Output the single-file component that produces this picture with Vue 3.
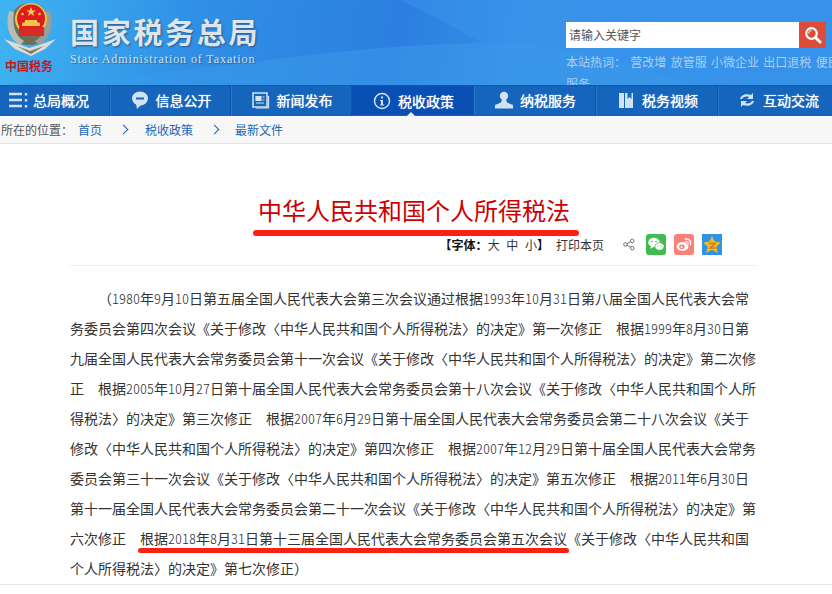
<template>
  <div class="page">
    <header class="top">
      <svg class="top-bg" width="832" height="85" viewBox="0 0 832 85">
        <path d="M0 85 C 170 78 330 45 480 43 C 560 42 620 62 690 85 Z" fill="#3a9bea" opacity="0.55" />
        <path d="M400 0 C 470 30 490 65 640 85 L 832 85 L 832 0 Z" fill="#3b97ea" opacity="0.45" />
      </svg>
      <div class="brand">
        <svg class="emblem" width="53" height="55" viewBox="0 0 53 55">
          <ellipse cx="26.5" cy="22" rx="20" ry="21" fill="#6f6e58" />
          <path d="M6 9 C 2 24 6 37 17 43 L 21 39 C 12 34 9 23 11 10 Z" fill="#b9bcb4" />
          <path d="M47 9 C 51 24 47 37 36 43 L 32 39 C 41 34 44 23 42 10 Z" fill="#9a9e96" />
          <circle cx="28" cy="17" r="16" fill="#e8c84a" />
          <circle cx="28" cy="16.5" r="14" fill="#de1c20" />
          <path d="M28 5l1.4 3.4h3.6l-2.9 2.1 1.1 3.4-3.2-2.1-3 2.1 1.1-3.4-2.9-2.1h3.5z" fill="#f4d040" />
          <circle cx="19.5" cy="12" r="1.3" fill="#f4d040" />
          <circle cx="36.5" cy="12" r="1.3" fill="#f4d040" />
          <path d="M19 24h18v-3l-3-1v-2H22v2l-3 1z" fill="#f0c848" />
          <rect x="16" y="25" width="25" height="9" fill="#d82a24" />
          <path d="M1 37 L18 43 L26 46 L36 43 L53 37 L42 47 L28 54 L12 47 Z" fill="#dcdcd4" />
          <path d="M14 44 L27 49 L41 44 L28 52 Z" fill="#7c7a70" />
        </svg>
        <span class="seal">中国税务</span>
      </div>
      <div class="title-box">
        <div class="org-cn">国家税务总局</div>
        <div class="org-en">State Administration of Taxation</div>
      </div>
      <div class="search-box">
        <div class="search">
          <div class="search-input">请输入关键字</div>
          <button class="search-btn">
            <svg width="18" height="18" viewBox="0 0 18 18">
              <circle cx="7.5" cy="7.5" r="5.3" fill="none" stroke="#fff" stroke-width="2.2" />
              <path d="M11.5 11.5 L16 16" stroke="#fff" stroke-width="3" stroke-linecap="round" />
              <path d="M4.6 7.5 A3 3 0 0 1 7.5 4.6" fill="none" stroke="#fff" stroke-width="1" />
            </svg>
          </button>
        </div>
        <div class="hot">本站热词：&nbsp;营改增 放管服 小微企业 出口退税 便民服务</div>
      </div>
    </header>

    <nav class="nav">
      <a v-for="item in navItems" :key="item.name" class="nav-item" :class="{ active: item.active }">
        <svg class="nav-icon" width="22" height="20" viewBox="0 0 22 20" v-html="item.icon"></svg>
        <span>{{ item.name }}</span>
      </a>
    </nav>

    <div class="crumbs">
      <span class="crumb-label">所在的位置：</span>
      <a class="crumb">首页</a>
      <i class="crumb-arrow"></i>
      <a class="crumb">税收政策</a>
      <i class="crumb-arrow"></i>
      <a class="crumb">最新文件</a>
    </div>

    <main class="article">
      <div class="head">
        <h1 class="doc-title">中华人民共和国个人所得税法</h1>
        <span class="title-line"></span>
        <div class="tools">
          <span class="font-tool"><b>【字体：</b>大&nbsp;&nbsp;中&nbsp;&nbsp;小<b>】</b></span>
          <span class="print">打印本页</span>
          <svg class="share" width="12" height="13" viewBox="0 0 13 13">
            <circle cx="10" cy="2.6" r="1.9" fill="none" stroke="#666" />
            <circle cx="10" cy="10.4" r="1.9" fill="none" stroke="#666" />
            <circle cx="2.6" cy="6.5" r="1.9" fill="none" stroke="#666" />
            <path d="M4.3 5.6 L8.3 3.5 M4.3 7.4 L8.3 9.5" stroke="#666" />
          </svg>
          <svg class="social" width="20" height="21" viewBox="0 0 20 21">
            <rect width="20" height="21" rx="3" fill="#3fbc4b" />
            <ellipse cx="8" cy="8.5" rx="5.8" ry="4.7" fill="#fff" />
            <path d="M5 11.5 L4.5 15 L8 12.5 Z" fill="#fff" />
            <ellipse cx="13.5" cy="12.5" rx="4.6" ry="3.8" fill="#fff" stroke="#3fbc4b" stroke-width="0.8" />
            <circle cx="6" cy="7.5" r="0.8" fill="#3fbc4b" />
            <circle cx="10" cy="7.5" r="0.8" fill="#3fbc4b" />
            <circle cx="12" cy="12" r="0.6" fill="#3fbc4b" />
            <circle cx="15" cy="12" r="0.6" fill="#3fbc4b" />
          </svg>
          <svg class="social" width="20" height="21" viewBox="0 0 20 21">
            <rect width="20" height="21" rx="3" fill="#fb8075" />
            <ellipse cx="8.5" cy="12.5" rx="6" ry="4.4" fill="#fff" />
            <ellipse cx="8" cy="12.8" rx="2.8" ry="2.3" fill="#fb8075" />
            <circle cx="7.6" cy="13" r="1" fill="#fff" />
            <path d="M11.5 5 C 15 4.4 17.5 7 16.4 10.6" fill="none" stroke="#fff" stroke-width="1.5" stroke-linecap="round" />
            <path d="M12 7.6 C 13.4 7.4 14.5 8.4 14.1 10" fill="none" stroke="#fff" stroke-width="1.2" stroke-linecap="round" />
          </svg>
          <svg class="social" width="20" height="21" viewBox="0 0 20 21">
            <rect width="20" height="21" fill="#2c93e8" />
            <path d="M10 2 L12.7 7.6 L19 8.4 L14.4 12.6 L15.8 19 L10 15.8 L4.2 19 L5.6 12.6 L1 8.4 L7.3 7.6 Z" fill="#f5b91f" />
            <path d="M7 9.5 H13 L8 14 H13.5" fill="none" stroke="#d9761a" stroke-width="1.4" />
          </svg>
        </div>
      </div>

      <div class="body-text">
        <p v-for="(line, i) in lines" :key="i" class="line" :class="{ indent: i === 0 }">
          <template v-for="(part, j) in splitDigits(line)" :key="j"><span v-if="/\d/.test(part)" class="num">{{ part }}</span><template v-else>{{ part }}</template></template>
        </p>
        <span class="mark"></span>
      </div>
    </main>
    <div class="foot-line"></div>
  </div>
</template>

<script setup>
const navItems = [
  {
    name: '总局概况',
    icon: '<path d="M1 4h13M1 10h13M1 16h13" stroke="#d3e2f2" stroke-width="2.4"/><path d="M18 3v2.4M18 9v2.4M18 15v2.4" stroke="#d3e2f2" stroke-width="2.4"/>'
  },
  {
    name: '信息公开',
    icon: '<ellipse cx="11" cy="8.5" rx="8" ry="7" fill="#d3e2f2"/><path d="M7 14l1 5 4-4z" fill="#d3e2f2"/><rect x="7" y="7.5" width="8" height="2" fill="#1665bd"/>'
  },
  {
    name: '新闻发布',
    icon: '<rect x="3" y="3" width="14" height="14" fill="none" stroke="#d3e2f2" stroke-width="1.5"/><path d="M18.5 6v12H6" fill="none" stroke="#d3e2f2" stroke-width="1.2"/><path d="M6 6.5h5v4H6zM6 13h8M12.5 7h2M12.5 10h2" fill="#d3e2f2" stroke="#d3e2f2" stroke-width="1.2"/>'
  },
  {
    name: '税收政策',
    active: true,
    icon: '<circle cx="11" cy="10" r="7.5" fill="none" stroke="#d3e2f2" stroke-width="1.5"/><rect x="10" y="5.5" width="2" height="2" fill="#d3e2f2"/><path d="M9 9h3v4.5h1.2v1H9v-1h1V10H9z" fill="#d3e2f2"/>'
  },
  {
    name: '纳税服务',
    icon: '<circle cx="11" cy="6" r="4.2" fill="#d3e2f2"/><path d="M9 9.5h4l1 3 6 2.5v3.5H2V15l6-2.5z" fill="#d3e2f2"/>'
  },
  {
    name: '税务视频',
    icon: '<path d="M4 3h5v15H4z" fill="#d3e2f2"/><path d="M10 3h2.5v6l2-2 2 2V3H18v15h-8z" fill="#d3e2f2"/>'
  },
  {
    name: '互动交流',
    icon: '<path d="M4 9c1-4 6-6 11-4l2-2v6h-6l2-2c-3-1-6 0-7 2z" fill="#d3e2f2"/><path d="M18 11c-1 4-6 6-11 4l-2 2v-6h6l-2 2c3 1 6 0 7-2z" fill="#d3e2f2"/>'
  }
]

const lines = [
  '（1980年9月10日第五届全国人民代表大会第三次会议通过根据1993年10月31日第八届全国人民代表大会常',
  '务委员会第四次会议《关于修改〈中华人民共和国个人所得税法〉的决定》第一次修正　根据1999年8月30日第',
  '九届全国人民代表大会常务委员会第十一次会议《关于修改〈中华人民共和国个人所得税法〉的决定》第二次修',
  '正　根据2005年10月27日第十届全国人民代表大会常务委员会第十八次会议《关于修改〈中华人民共和国个人所',
  '得税法〉的决定》第三次修正　根据2007年6月29日第十届全国人民代表大会常务委员会第二十八次会议《关于',
  '修改〈中华人民共和国个人所得税法〉的决定》第四次修正　根据2007年12月29日第十届全国人民代表大会常务',
  '委员会第三十一次会议《关于修改〈中华人民共和国个人所得税法〉的决定》第五次修正　根据2011年6月30日',
  '第十一届全国人民代表大会常务委员会第二十一次会议《关于修改〈中华人民共和国个人所得税法〉的决定》第',
  '六次修正　根据2018年8月31日第十三届全国人民代表大会常务委员会第五次会议《关于修改〈中华人民共和国',
  '个人所得税法〉的决定》第七次修正）'
]

// digits are half width in the original, the rest stays full width
const splitDigits = (line) => line.split(/(\d+)/).filter(Boolean)
</script>

<style scoped>
.page {
  width: 832px;
  height: 594px;
  overflow: hidden;
  position: relative;
  background: #fff;
  font-family: "Liberation Sans", "Noto Sans CJK SC", sans-serif;
  font-size: 14px;
  color: #333;
}

.top {
  position: relative;
  height: 85px;
  display: flex;
  overflow: hidden;
  background: linear-gradient(100deg, #3fb4f1 0%, #2f8fe6 24%, #2c7fe0 48%, #3690e8 62%, #338fe7 100%);
}

.top-bg {
  position: absolute;
  left: 0;
  top: 0;
}

.brand {
  position: relative;
  width: 70px;
  flex: none;
  padding: 2px 0 0 3px;
  box-sizing: border-box;
}

.emblem {
  display: block;
}

.seal {
  display: block;
  margin-left: 2px;
  font-family: "Noto Sans CJK SC", sans-serif;
  font-size: 12px;
  line-height: 17px;
  font-weight: 700;
  color: #c8161d;
  white-space: nowrap;
}

.title-box {
  position: relative;
  flex: none;
  width: 496px;
  padding-top: 14px;
}

.org-cn {
  font-family: "Noto Sans CJK SC", sans-serif;
  font-size: 29px;
  line-height: 34px;
  font-weight: 700;
  letter-spacing: 2.7px;
  color: #dfe5ea;
  text-shadow: 1px 1px 2px rgba(40, 70, 110, 0.75);
}

.org-en {
  margin-top: 4px;
  font-family: "Liberation Serif", serif;
  font-size: 12px;
  line-height: 14px;
  letter-spacing: 0.9px;
  color: #d4e2ee;
  text-shadow: 1px 1px 1px rgba(30, 60, 110, 0.6);
  white-space: nowrap;
}

.search-box {
  position: relative;
  flex: none;
  width: 280px;
  padding-top: 22px;
}

.search {
  display: flex;
  width: 260px;
  height: 26px;
}

.search-input {
  flex: 1;
  background: #fff;
  padding: 2px 0 0 3px;
  font-size: 12px;
  line-height: 24px;
  color: #555;
}

.search-btn {
  width: 27px;
  height: 26px;
  padding: 0;
  border: none;
  background: #dd4b39;
  display: flex;
  align-items: center;
  justify-content: center;
}

.hot {
  margin-top: 4px;
  font-size: 12px;
  line-height: 22px;
  word-spacing: 1px;
  color: #a9d0f3;
  width: 280px;
}

.nav {
  height: 31px;
  display: flex;
  background: #1665bd;
  border-top: 1px solid #115aab;
  box-sizing: border-box;
}

.nav-item {
  position: relative;
  flex: none;
  width: 121px;
  display: flex;
  align-items: center;
  justify-content: center;
  gap: 5px;
  padding-bottom: 2px;
  box-sizing: border-box;
  border-right: 1px solid #0d54a6;
  box-shadow: 1px 0 0 #2a7ac8;
  font-size: 14px;
  color: #fff;
  text-shadow: 0 0 1px #fff;
  white-space: nowrap;
}

.nav-item:nth-child(n + 4) {
  width: 122px;
}

.nav-item:first-child {
  width: 110px;
  justify-content: flex-start;
  padding-left: 8px;
  gap: 3px;
}

.nav-item:last-child {
  width: 114px;
  padding-left: 5px;
  border-right: none;
  box-shadow: none;
}

.nav-item.active {
  height: 29px;
  padding-bottom: 0;
  background: #0a4fb4;
}

.nav-item.active::after {
  content: "";
  position: absolute;
  left: 54px;
  bottom: -2px;
  border-left: 5px solid transparent;
  border-right: 5px solid transparent;
  border-bottom: 5px solid #f7f7f7;
}

.nav-icon {
  flex: none;
}

.crumbs {
  height: 27px;
  display: flex;
  align-items: center;
  background: #f7f7f7;
  border-bottom: 1px solid #e2e2e2;
  font-size: 12px;
  color: #555;
}

.crumb-label {
  margin-left: 1px;
  width: 77px;
}

.crumb {
  color: #1a66b5;
}

.crumb-arrow {
  width: 6px;
  height: 6px;
  margin: 0 18px;
  border-top: 1px solid #1a66b5;
  border-right: 1px solid #1a66b5;
  transform: rotate(45deg);
}

.crumb-arrow:last-of-type {
  margin-right: 17px;
}

.article {
  padding: 0 76px 0 70px;
}

.head {
  position: relative;
  height: 122px;
  border-bottom: 1px solid #eee;
  box-sizing: border-box;
}

.doc-title {
  margin: 0;
  padding: 52px 0 0 2px;
  text-align: center;
  font-size: 24px;
  line-height: 32px;
  font-weight: 400;
  color: #cc0000;
}

.title-line {
  position: absolute;
  left: 183px;
  top: 86px;
  width: 326px;
  height: 6px;
  border-radius: 3px;
  background: #fb2112;
}

.tools {
  position: absolute;
  right: 34px;
  top: 90px;
  display: flex;
  align-items: center;
  height: 21px;
  font-size: 12px;
  color: #333;
  white-space: nowrap;
}

.font-tool b {
  font-weight: 700;
  color: #111;
}

.print {
  margin-left: 7px;
}

.share {
  margin-left: 19px;
  margin-right: 11px;
}

.social {
  margin-left: 8px;
  flex: none;
}

.share + .social {
  margin-left: 0;
}

.body-text {
  position: relative;
  padding-top: 17px;
}

.line {
  margin: 0;
  font-family: "Noto Sans CJK SC", sans-serif;
  font-size: 14px;
  line-height: 30px;
  height: 30px;
  color: #333;
  white-space: nowrap;
}

.line.indent {
  padding-left: 28px;
}

.num {
  font-feature-settings: "hwid";
  font-weight: 300;
}

.mark {
  position: absolute;
  left: 68px;
  top: 282px;
  width: 431px;
  height: 5px;
  border-radius: 3px;
  background: #fb2112;
}

.foot-line {
  position: absolute;
  left: 0;
  top: 584px;
  width: 832px;
  height: 1px;
  background: #e6e6e6;
}
</style>

<style>
html,
body {
  margin: 0;
  background: #fff;
}
</style>
